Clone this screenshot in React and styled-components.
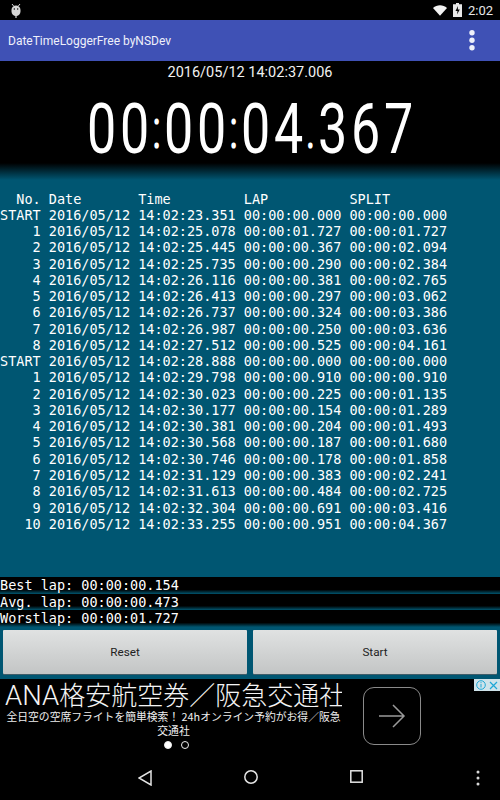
import React from "react";
import styled, { createGlobalStyle } from "styled-components";

const Global = createGlobalStyle`
  html, body { margin: 0; padding: 0; background: #000; }
  #root { width: 500px; height: 800px; overflow: hidden; }
`;
const Screen = styled.div`
  width: 500px; height: 800px; display: flex; flex-direction: column;
  background: #000; font-family: Roboto, sans-serif; color: #fff;
`;
const StatusBar = styled.div`
  height: 20px; flex: none; display: flex; align-items: center; justify-content: space-between;
  padding: 0 7px 0 10px; background: #000;
`;
const StatusRight = styled.div`display: flex; align-items: center; gap: 6px; font-size: 13px; color: #e8e8e8;`;
const AppBar = styled.div`
  height: 41px; flex: none; display: flex; align-items: center; justify-content: space-between;
  padding: 0 24px 0 8px; background: #3f51b5; font-size: 12px; color: #eef0fa;
`;
const Main = styled.div`
  flex: none; height: 618px; display: flex; flex-direction: column;
  background: linear-gradient(180deg, #000 0, #000 102px, #005672 119px, #005672 100%);
`;
const Now = styled.div`text-align: center; font-size: 14.5px; line-height: 23px; color: #f2f2f2;`;
const ClockWrap = styled.div`height: 85px; display: flex; justify-content: center;`;
const Clock = styled.div`
  display: flex; height: 52px; margin-top: 20px;
  font-size: 52px; line-height: 52px; font-weight: 400;
  transform: scaleY(1.37); transform-origin: center;
`;
const Glyph = styled.span`
  display: block; text-align: center; width: ${p => (p.$narrow ? 11 : 33)}px;
  font-size: ${p => (p.$narrow ? 40 : 52)}px;
`;
const LogTable = styled.div`
  margin-top: 21.5px; height: 386.5px;
  font-family: "DejaVu Sans Mono", monospace; font-size: 13.5px; line-height: 16.27px; color: #fff;
`;
const LogLine = styled.div`white-space: pre; height: 16.27px;`;
const Stats = styled.div`display: flex; flex-direction: column; height: 52px; flex: none;`;
const StatLine = styled.div`
  height: 16.6px; white-space: pre; overflow: visible;
  font-family: "DejaVu Sans Mono", monospace; font-size: 13.5px; line-height: 17px;
  background: linear-gradient(180deg, #000 0, #000 74%, #00556f 100%);
`;
const Buttons = styled.div`display: flex; gap: 6px; padding: 1px 3px 0; height: 44px; flex: none;`;
const PushButton = styled.div`
  flex: 1; display: flex; align-items: center; justify-content: center;
  background: linear-gradient(180deg, #e0e2e2, #c3c5c5);
  box-shadow: 0 1px 0 #3f5d69; border-radius: 1px; color: #222; font-size: 11.7px;
`;
const Ad = styled.div`
  position: relative; flex: none; height: 76px; background: #000; display: flex;
  padding-left: 5px;
`;
const AdText = styled.div`
  width: 337px; display: flex; flex-direction: column; align-items: center; overflow: hidden;
  font-family: "Noto Sans CJK JP", sans-serif;
`;
const AdTitle = styled.div`
  width: 337px; height: 30px; white-space: nowrap; overflow: hidden; font-size: 26px; line-height: 30px; color: #f4f4f4;
  font-weight: 300;
`;
const AdLatin = styled.span`font-family: Roboto, sans-serif; font-size: 27.5px;`;
const AdBody = styled.div`
  font-size: 10.8px; line-height: 14px; text-align: center; color: #eee; width: 337px;
`;
const Dots = styled.div`display: flex; gap: 9px; margin: 4px 0 0 6px;`;
const Dot = styled.span`
  width: 8px; height: 8px; border-radius: 50%; box-sizing: border-box;
  border: 1px solid #eee; background: ${p => (p.$on ? "#fff" : "transparent")};
`;
const AdArrow = styled.div`
  width: 58px; height: 58px; box-sizing: border-box; margin: 8px 0 0 21px;
  border: 1.5px solid #8a8a8a; border-radius: 11px; display: flex; align-items: center; justify-content: center;
`;
const AdBadge = styled.div`
  position: absolute; right: 0; top: 0; height: 12px; width: 26px; display: flex;
  background: #cfe3ea; align-items: center; justify-content: space-around;
`;
const NavBar = styled.div`
  flex: 1; display: flex; align-items: center; position: relative; background: #000;
`;
const NavGroup = styled.div`
  flex: 1; display: flex; justify-content: center; gap: 92px; box-sizing: border-box;
`;
const NavMenu = styled.div`position: absolute; right: 18px; top: 50%; transform: translateY(-50%); display: flex;`;

const fmt = (no, t, l, s) => `${no.padStart(5)} 2016/05/12 ${t} ${l} ${s}`;
const rows = [
  ["START","23.351","00.000","00.000"],["1","25.078","01.727","01.727"],["2","25.445","00.367","02.094"],
  ["3","25.735","00.290","02.384"],["4","26.116","00.381","02.765"],["5","26.413","00.297","03.062"],
  ["6","26.737","00.324","03.386"],["7","26.987","00.250","03.636"],["8","27.512","00.525","04.161"],
  ["START","28.888","00.000","00.000"],["1","29.798","00.910","00.910"],["2","30.023","00.225","01.135"],
  ["3","30.177","00.154","01.289"],["4","30.381","00.204","01.493"],["5","30.568","00.187","01.680"],
  ["6","30.746","00.178","01.858"],["7","31.129","00.383","02.241"],["8","31.613","00.484","02.725"],
  ["9","32.304","00.691","03.416"],["10","33.255","00.951","04.367"],
];

const Android = () => (
  <svg width="12" height="15" viewBox="0 0 12 15" fill="#d8d8d8">
    <path d="M2 1l1.600 2M10 1L8.400 3" stroke="#d8d8d8" strokeWidth="1" />
    <path d="M1.500 7a4.500 4.500 0 0 1 9 0v1.500a4.500 4.500 0 0 1-9 0z" />
    <rect x="5.400" y="11" width="1.200" height="4" />
    <circle cx="4.300" cy="6" r=".7" fill="#000" /><circle cx="7.700" cy="6" r=".7" fill="#000" />
  </svg>
);
const Wifi = () => (
  <svg width="14" height="11" viewBox="0 0 16 12"><path d="M0 3.200C4.500-1 11.500-1 16 3.200L8 12z" fill="#f2f2f2" /></svg>
);
const Battery = () => (
  <svg width="9" height="14" viewBox="0 0 9 14">
    <path d="M3 0h3v1.200h3V14H0V1.200h3z" fill="#e8e8e8" />
    <path d="M5 3L2.500 8h2L4 11.500 6.800 6.500h-2z" fill="#000" />
  </svg>
);
const Kebab = ({ c = "#eef0fa", r = 2.7, gap = 7.5 }) => (
  <svg width="8" height={r * 2 + gap * 2 + 2} viewBox={`0 0 8 ${r * 2 + gap * 2 + 2}`} fill={c}>
    {[0, 1, 2].map(i => <circle key={i} cx="4" cy={r + 1 + i * gap} r={r} />)}
  </svg>
);

const clock = "00:00:04.367".split("");

export default function App() {
  return (
    <Screen>
      <Global />
      <StatusBar>
        <Android />
        <StatusRight><Wifi /><Battery /><span>2:02</span></StatusRight>
      </StatusBar>
      <AppBar>
        <span>DateTimeLoggerFree byNSDev</span>
        <Kebab />
      </AppBar>
      <Main>
        <Now>2016/05/12 14:02:37.006</Now>
        <ClockWrap>
          <Clock>
            {clock.map((c, i) => <Glyph key={i} $narrow={c === ":" || c === "."}>{c}</Glyph>)}
          </Clock>
        </ClockWrap>
        <LogTable>
          <LogLine>{"  No. Date       Time         LAP          SPLIT"}</LogLine>
          {rows.map((r, i) => (
            <LogLine key={i}>{fmt(r[0], `14:02:${r[1]}`, `00:00:${r[2]}`, `00:00:${r[3]}`)}</LogLine>
          ))}
        </LogTable>
        <Stats>
          <StatLine>Best lap: 00:00:00.154</StatLine>
          <StatLine>Avg. lap: 00:00:00.473</StatLine>
          <StatLine>Worstlap: 00:00:01.727</StatLine>
        </Stats>
        <Buttons>
          <PushButton>Reset</PushButton>
          <PushButton>Start</PushButton>
        </Buttons>
      </Main>
      <Ad>
        <AdText>
          <AdTitle><AdLatin>ANA</AdLatin>格安航空券／阪急交通社</AdTitle>
          <AdBody>全日空の空席フライトを簡単検索！ 24hオンライン予約がお得／阪急交通社</AdBody>
          <Dots><Dot $on /><Dot /></Dots>
        </AdText>
        <AdArrow>
          <svg width="28" height="26" viewBox="0 0 28 26" fill="none" stroke="#9a9a9a" strokeWidth="1.5">
            <path d="M1 13h25M15 2l11 11-11 11" />
          </svg>
        </AdArrow>
        <AdBadge>
          <svg width="10" height="10" viewBox="0 0 10 10" fill="none" stroke="#1ea7d6"><circle cx="5" cy="5" r="4.300" /><path d="M5 4v3.500M5 2.200v1" /></svg>
          <svg width="9" height="9" viewBox="0 0 9 9" stroke="#1ea7d6" strokeWidth="1.2"><path d="M1 1l7 7M8 1L1 8" /></svg>
        </AdBadge>
      </Ad>
      <NavBar>
        <NavGroup>
          <svg width="14" height="16" viewBox="0 0 14 16" fill="none" stroke="#e4e4e4" strokeWidth="1.5"><path d="M13 1v14L1 8z" /></svg>
          <svg width="14" height="14" viewBox="0 0 14 14" fill="none" stroke="#e4e4e4" strokeWidth="1.5"><circle cx="7" cy="7" r="6.200" /></svg>
          <svg width="13" height="13" viewBox="0 0 13 13" fill="none" stroke="#e4e4e4" strokeWidth="1.5"><rect x=".8" y=".8" width="11.400" height="11.400" /></svg>
        </NavGroup>
        <NavMenu><Kebab c="#d8d8d8" r={1.5} gap={6} /></NavMenu>
      </NavBar>
    </Screen>
  );
}
